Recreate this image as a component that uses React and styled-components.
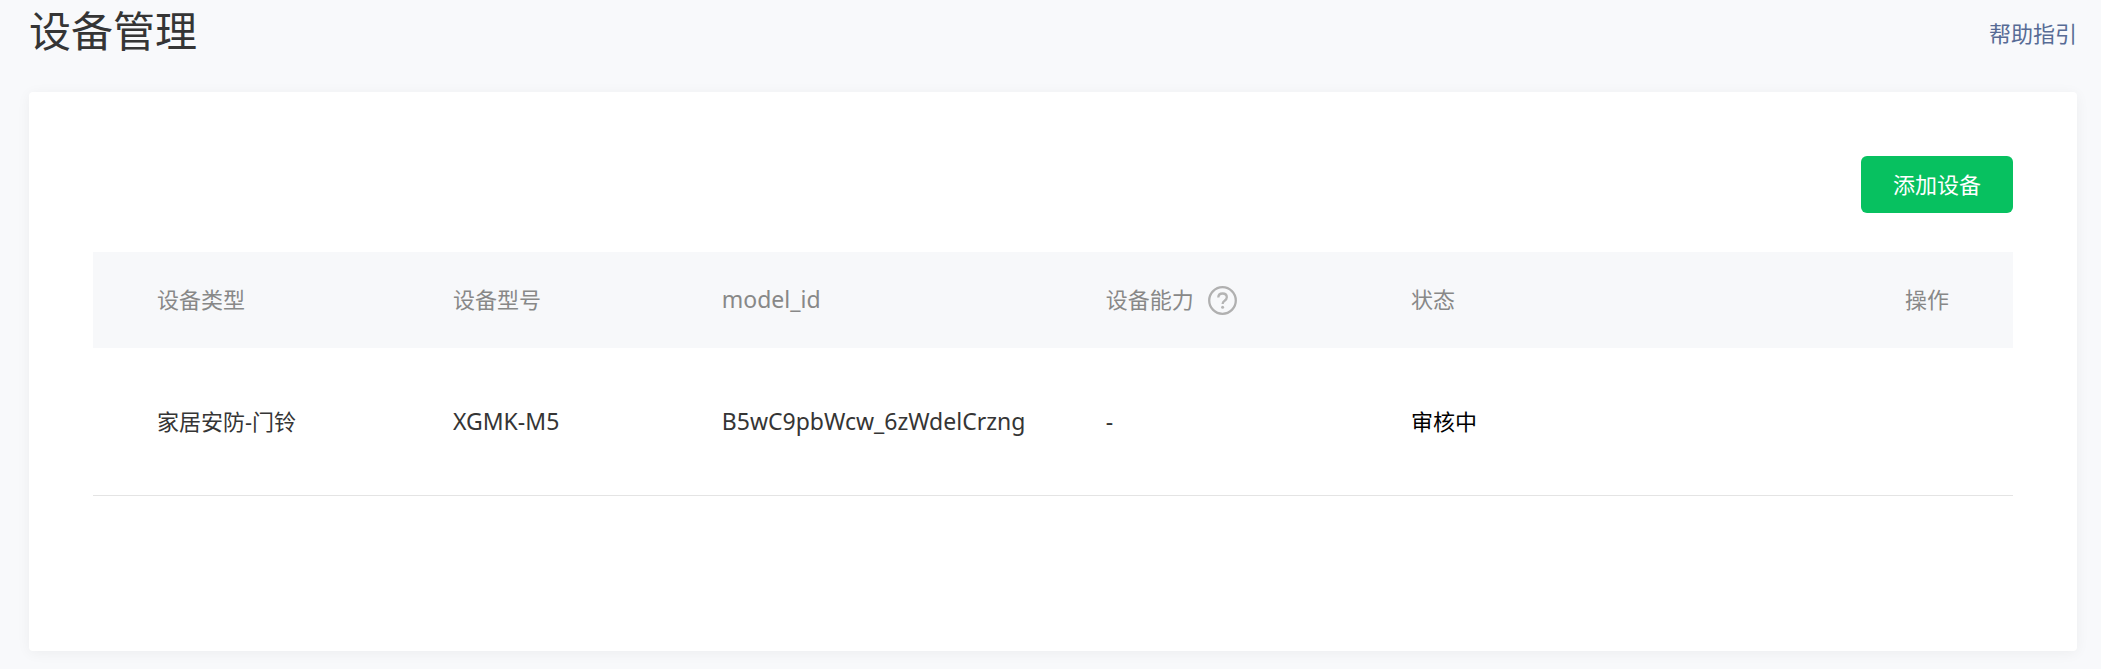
import React from "react";
import styled, { createGlobalStyle } from "styled-components";

const GlobalStyle = createGlobalStyle`
  * {
    box-sizing: border-box;
  }

  body {
    margin: 0;
    background: #f8f9fb;
    color: #353535;
    font-family: "Noto Sans", "Noto Sans CJK SC", sans-serif;
    font-size: 22px;
    line-height: 32px;
  }
`;

// Styled components
const Page = styled.main`
  padding: 0 24px 18px 29px;
`;

const PageHeader = styled.header`
  display: flex;
  align-items: flex-start;
  justify-content: space-between;
  padding-bottom: 26px;
`;

const Title = styled.h1`
  margin: 0;
  font-size: 42px;
  font-weight: 400;
  line-height: 62px;
`;

const HelpLink = styled.a`
  color: #576b95;
  line-height: 66px;
  text-decoration: none;

  &:hover {
    text-decoration: underline;
  }
`;

const Card = styled.section`
  padding: 64px 64px 155px;
  background: #ffffff;
  border-radius: 4px;
  box-shadow: 0 2px 14px rgba(0, 0, 0, 0.05);
`;

const Toolbar = styled.div`
  display: flex;
  justify-content: flex-end;
  margin-bottom: 39px;
`;

const AddButton = styled.button`
  height: 57px;
  padding: 0 32px 2px;
  border: none;
  border-radius: 6px;
  background: #07c160;
  color: #ffffff;
  font: inherit;
  cursor: pointer;

  &:hover {
    background: #06ad56;
  }
`;

const Table = styled.table`
  width: 100%;
  border-collapse: separate;
  border-spacing: 0;
  table-layout: fixed;
  text-align: left;
`;

const Col = styled.col`
  width: ${(props) => props.$width};
`;

const HeadCell = styled.th`
  height: 96px;
  padding: 0 0 2px;
  background: #f7f8fa;
  color: #888888;
  font-size: ${(props) => (props.$latin ? "23px" : "22px")};
  font-weight: 400;
  text-align: ${(props) => props.$align || "left"};

  &:first-child {
    padding-left: 64px;
  }

  &:last-child {
    padding-right: 64px;
  }
`;

const Cell = styled.td`
  height: 148px;
  padding: 0 0 2px;
  border-bottom: 1px solid #e4e4e4;
  color: ${(props) => props.$color || "inherit"};
  font-size: ${(props) => (props.$latin ? "23px" : "22px")};

  &:first-child {
    padding-left: 64px;
  }
`;

const HelpSvg = styled.svg`
  margin-left: 14px;
  vertical-align: -7px;
`;

const HelpIcon = () => (
  <HelpSvg width="29" height="29" viewBox="0 0 29 29" fill="none" role="img" aria-label="帮助">
    <circle cx="14.5" cy="14.5" r="13.3" stroke="#b0b0b0" strokeWidth="2.3" />
    <path
      d="M10.3 11.6c0-2.5 1.7-4.1 4.3-4.1 2.5 0 4.2 1.5 4.2 3.7 0 1.6-.8 2.5-2.2 3.5-1.5 1-2 1.7-2 3.3"
      stroke="#b4b4b4"
      strokeWidth="2.3"
    />
    <circle cx="14.6" cy="21.3" r="1.5" fill="#b4b4b4" />
  </HelpSvg>
);

const devices = [
  {
    type: "家居安防-门铃",
    model: "XGMK-M5",
    modelId: "B5wC9pbWcw_6zWdelCrzng",
    ability: "-",
    status: "审核中",
  },
];

const App = () => {
  return (
    <>
      <GlobalStyle />
      <Page>
        <PageHeader>
          <Title>设备管理</Title>
          <HelpLink href="#">帮助指引</HelpLink>
        </PageHeader>

        <Card>
          <Toolbar>
            <AddButton type="button">添加设备</AddButton>
          </Toolbar>

          <Table>
            <colgroup>
              <Col $width="18.75%" />
              <Col $width="14%" />
              <Col $width="20%" />
              <Col $width="15.9%" />
              <Col $width="16%" />
              <Col />
            </colgroup>
            <thead>
              <tr>
                <HeadCell>设备类型</HeadCell>
                <HeadCell>设备型号</HeadCell>
                <HeadCell $latin>model_id</HeadCell>
                <HeadCell>
                  设备能力
                  <HelpIcon />
                </HeadCell>
                <HeadCell>状态</HeadCell>
                <HeadCell $align="right">操作</HeadCell>
              </tr>
            </thead>
            <tbody>
              {devices.map((device) => (
                <tr key={device.modelId}>
                  <Cell>{device.type}</Cell>
                  <Cell $latin>{device.model}</Cell>
                  <Cell $latin>{device.modelId}</Cell>
                  <Cell $latin>{device.ability}</Cell>
                  <Cell $color="#000000">{device.status}</Cell>
                  <Cell />
                </tr>
              ))}
            </tbody>
          </Table>
        </Card>
      </Page>
    </>
  );
};

export default App;
